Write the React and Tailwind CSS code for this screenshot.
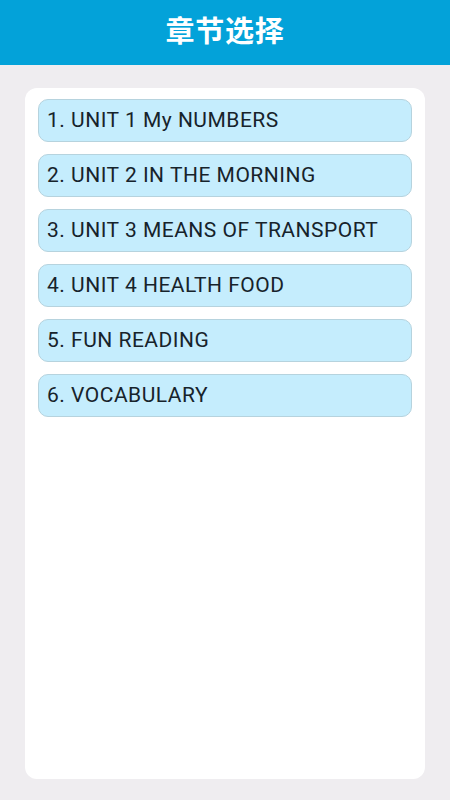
import React from "react";

const units = [
  "1. UNIT 1 My NUMBERS",
  "2. UNIT 2 IN THE MORNING",
  "3. UNIT 3 MEANS OF TRANSPORT",
  "4. UNIT 4 HEALTH FOOD",
  "5. FUN READING",
  "6. VOCABULARY",
];

export default function App() {
  return (
    <div
      className="w-[450px] h-[800px] flex flex-col bg-[#efedf0]"
      style={{ fontFamily: "Roboto, 'Noto Sans CJK SC', sans-serif" }}
    >
      {/* Title bar */}
      <div className="h-[65px] shrink-0 bg-[#03a2d9] flex items-center justify-center">
        <h1 className="text-white text-[29px] font-bold tracking-wide">章节选择</h1>
      </div>

      {/* Chapter list */}
      <div className="flex-1 px-[25px] pt-[23px] pb-[21px] flex">
        <div className="flex-1 bg-white rounded-[12px] px-[13px] pt-[11px] flex flex-col gap-[12px]">
          {units.map((u) => (
            <div
              key={u}
              className="h-[43px] shrink-0 bg-[#c5edfd] border border-[#b6d3de] rounded-[10px] flex items-center pl-[8px] pr-[10px] pt-[1px] text-[21px] tracking-[0.5px] text-[#17232b]"
            >
              {u}
            </div>
          ))}
        </div>
      </div>
    </div>
  );
}
